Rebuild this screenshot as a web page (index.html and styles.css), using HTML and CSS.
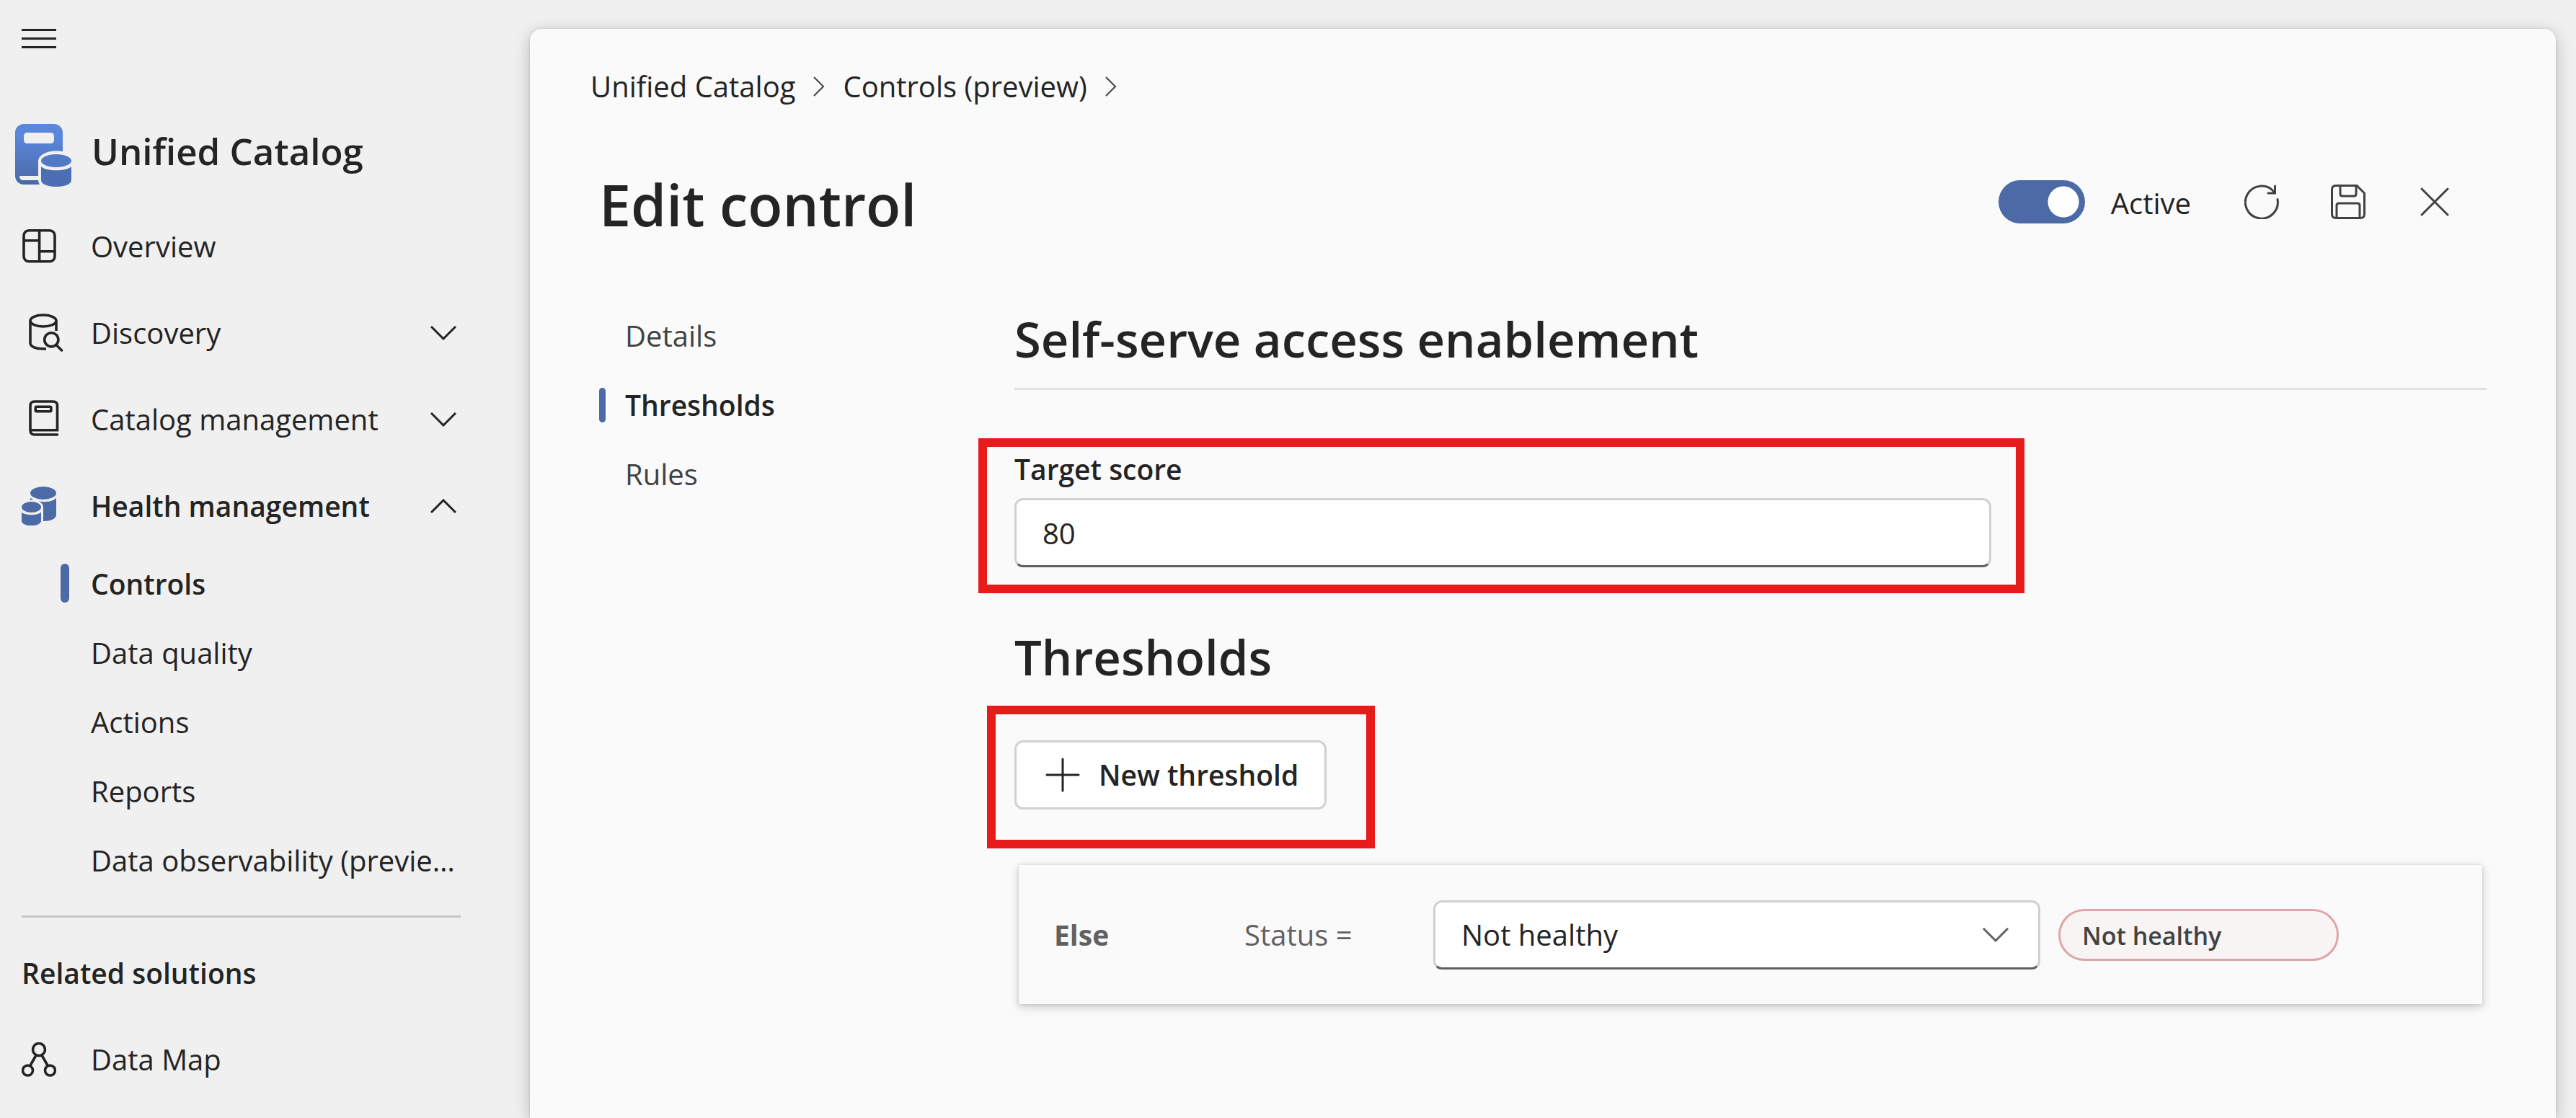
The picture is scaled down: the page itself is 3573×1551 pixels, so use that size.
FILE: index.html
```html
<!DOCTYPE html>
<html lang="en">
<head>
<meta charset="utf-8">
<meta name="viewport" content="width=device-width, initial-scale=1">
<title>Edit control - Unified Catalog</title>
<link rel="stylesheet" href="styles.css">
</head>
<body>
<div class="app">
  <aside class="sidebar">
    <button class="menu-button" type="button" aria-label="Toggle navigation">
      <svg class="icon" viewBox="0 0 48 48" fill="#242424"><path d="M0 10h48v3H0zM0 22h48v3H0zM0 34h48v3H0z"/></svg>
    </button>
    <div class="brand">
      <svg class="brand-logo" viewBox="0 0 78 88">
        <defs><linearGradient id="book" x1="0" y1="0" x2="0" y2="1"><stop offset="0.2" stop-color="#5a87dc"/><stop offset="1" stop-color="#4a68a4"/></linearGradient></defs>
        <path fill="url(#book)" fill-rule="evenodd" d="M12 0H54A12 12 0 0 1 66 12V38C48 35 32 42 32 52V72H6C6 76 8 78 12 78H32C32 80 33 82 34 84H12A12 12 0 0 1 0 72V12A12 12 0 0 1 12 0ZM17 12Q12 12 12 17V22Q12 27 17 27H49Q54 27 54 22V17Q54 12 49 12Z"/>
        <ellipse cx="57" cy="51" rx="21" ry="9" fill="#5179c6"/>
        <path fill="#4c6fb3" d="M36 59C42 66 72 66 78 59V78C78 90 36 90 36 78Z"/>
      </svg>
      <span class="brand-name">Unified Catalog</span>
    </div>
    <nav aria-label="Unified Catalog">
      <a class="nav-item" href="#">
        <svg class="icon" viewBox="0 0 48 48" fill="none" stroke="#242424" stroke-width="3.6"><rect x="3" y="1.8" width="43" height="43" rx="7"/><path d="M24.600 2v43M3 15.700h21.600M24.600 30.700h21"/></svg>
        <span class="nav-text">Overview</span>
      </a>
      <button class="nav-item" type="button">
        <svg class="icon icon-tall icon-inset" viewBox="0 0 48 54" fill="none" stroke="#242424" stroke-width="3.6" stroke-linecap="round"><ellipse cx="20" cy="10" rx="18" ry="8"/><path d="M2 10v31c0 5 8 8 18 8h4" stroke-linecap="butt"/><path d="M38 10v14" stroke-linecap="butt"/><circle cx="31.300" cy="36.300" r="9.600"/><path d="M38.500 44l7 7"/></svg>
        <span class="nav-text">Discovery</span>
        <svg class="chevron" viewBox="0 0 36 20" fill="none" stroke="#242424" stroke-width="3"><path d="M1 1l17 17L35 1"/></svg>
      </button>
      <button class="nav-item" type="button">
        <svg class="icon icon-tall icon-inset" viewBox="0 0 48 54" fill="none" stroke="#242424" stroke-width="3.6"><path stroke-linecap="round" d="M39.500 48H8q-6 0-6-6V8q0-6 6-6h25.500q6 0 6 6v33.700H2"/><rect x="9.300" y="9.300" width="21.500" height="6.500" rx="1.500"/></svg>
        <span class="nav-text">Catalog management</span>
        <svg class="chevron" viewBox="0 0 36 20" fill="none" stroke="#242424" stroke-width="3"><path d="M1 1l17 17L35 1"/></svg>
      </button>
      <button class="nav-item nav-strong" type="button" aria-expanded="true">
        <svg class="icon icon-tall" viewBox="0 0 48 54" fill="#4c6aa6"><ellipse cx="30" cy="9" rx="18" ry="9"/><path d="M48 15.500V39C48 45 40 48 30 48V28.500Q30 23.500 24 20.500C34 22 44 21 48 15.500ZM12 15.500L16 18.200L12 18.800Z"/><ellipse cx="13.500" cy="28.500" rx="13.500" ry="7.500"/><path d="M0 35.500c5 5 22 5 27 0v12c0 9-27 9-27 0z"/></svg>
        <span class="nav-text">Health management</span>
        <svg class="chevron" viewBox="0 0 36 20" fill="none" stroke="#242424" stroke-width="3"><path d="M1 19L18 2l17 17"/></svg>
      </button>
      <a class="sub-item sub-current" href="#" aria-current="page">Controls</a>
      <a class="sub-item" href="#">Data quality</a>
      <a class="sub-item" href="#">Actions</a>
      <a class="sub-item" href="#">Reports</a>
      <a class="sub-item" href="#">Data observability (preview)</a>
    </nav>
    <hr class="divider">
    <h2 class="related">Related solutions</h2>
    <a class="nav-item" href="#">
      <svg class="icon" viewBox="0 0 48 48" fill="none" stroke="#242424" stroke-width="3.6"><circle cx="24" cy="10" r="8.500"/><circle cx="8.500" cy="39" r="7"/><circle cx="39.500" cy="39" r="7"/><path d="M20 18l-8 14M28 18l8 14"/></svg>
      <span class="nav-text">Data Map</span>
    </a>
  </aside>

  <main class="panel">
    <nav class="breadcrumb" aria-label="Breadcrumb">
      <a href="#">Unified Catalog</a>
      <svg class="crumb-sep" viewBox="0 0 16 28" fill="none" stroke="#424242" stroke-width="2"><path d="M1 1l13 13L1 27"/></svg>
      <a href="#">Controls (preview)</a>
      <svg class="crumb-sep" viewBox="0 0 16 28" fill="none" stroke="#424242" stroke-width="2"><path d="M1 1l13 13L1 27"/></svg>
    </nav>

    <header class="page-head">
      <h1>Edit control</h1>
      <div class="actions">
        <label class="switch"><input type="checkbox" role="switch" checked><span class="switch-text">Active</span></label>
        <button class="tool" type="button" aria-label="Refresh"><svg class="icon" viewBox="0 0 48 48" fill="none" stroke="#424242" stroke-width="3" stroke-linecap="round"><path d="M46 20.500A22.500 22.500 0 1 1 41 10M42.500 2v10H33"/></svg></button>
        <button class="tool" type="button" aria-label="Save"><svg class="icon" viewBox="0 0 48 48" fill="none" stroke="#424242" stroke-width="3"><path d="M7 1.500h29l10.500 10.500v29q0 5.500-5.500 5.500H7q-5.500 0-5.500-5.500V7q0-5.500 5.500-5.500zM13 2v11q0 3 3 3h16q3 0 3-3V2M8 46V29q0-3 3-3h26q3 0 3 3v17"/></svg></button>
        <button class="tool" type="button" aria-label="Close"><svg class="icon" viewBox="0 0 48 48" fill="none" stroke="#424242" stroke-width="3" stroke-linecap="round"><path d="M6 6l36 36M42 6L6 42"/></svg></button>
      </div>
    </header>

    <div class="content">
      <nav class="tabs" aria-label="Control sections">
        <a class="tab" href="#">Details</a>
        <a class="tab tab-current" href="#" aria-current="true">Thresholds</a>
        <a class="tab" href="#">Rules</a>
      </nav>
      <section class="form">
        <h2 class="section-title ruled">Self-serve access enablement</h2>
        <div class="field highlight highlight-field">
          <label for="target">Target score</label>
          <input id="target" type="text" value="80">
        </div>
        <h2 class="section-title">Thresholds</h2>
        <div class="highlight highlight-button">
          <button class="new-threshold" type="button">
            <svg class="icon" viewBox="0 0 48 48" fill="none" stroke="#242424" stroke-width="3" stroke-linecap="round"><path d="M24 2v44M2 24h44"/></svg>
            New threshold
          </button>
        </div>
        <div class="rule-card">
          <strong>Else</strong>
          <label for="status">Status&nbsp;=</label>
          <div class="select-wrap">
            <select id="status"><option>Not healthy</option><option>Fair</option><option>Healthy</option></select>
            <svg class="chevron select-chevron" viewBox="0 0 36 20" fill="none" stroke="#616161" stroke-width="3"><path d="M1 1l17 17L35 1"/></svg>
          </div>
          <span class="badge">Not healthy</span>
        </div>
      </section>
    </div>
  </main>
</div>
</body>
</html>
```

FILE: styles.css
```css
* {
  box-sizing: border-box;
}

body {
  margin: 0;
  background: #f0f0f0;
  color: #242424;
  font: 400 40px/60px "Open Sans", "Noto Sans", sans-serif;
}

a {
  color: inherit;
  text-decoration: none;
}

button,
input,
select {
  margin: 0;
  font: inherit;
  color: inherit;
}

h1,
h2 {
  margin: 0;
  font-weight: 600;
}

.app {
  display: flex;
  min-height: 100vh;
}

.icon {
  flex: none;
  width: 48px;
  height: 48px;
}

.icon-tall {
  height: 54px;
}

.chevron {
  flex: none;
  width: 36px;
  height: 20px;
}

/* Sidebar */
.sidebar {
  flex: none;
  width: 735px;
  padding: 30px 96px 20px 30px;
}

.menu-button {
  display: flex;
  padding: 0;
  border: 0;
  background: none;
}

.brand {
  display: flex;
  align-items: center;
  gap: 28px;
  height: 120px;
  margin: 78px 0 6px -9px;
  font-size: 51px;
  font-weight: 600;
}

.brand-logo {
  width: 78px;
  height: 88px;
}

.brand-name {
  padding-bottom: 14px;
}

.nav-item {
  display: flex;
  align-items: center;
  width: 100%;
  height: 120px;
  padding: 0 6px 0 0;
  border: 0;
  background: none;
  text-align: left;
}

.icon-inset {
  margin: 0 -10px 0 10px;
}

.nav-text {
  flex: 1;
  padding-left: 48px;
}

.nav-strong,
.sub-current {
  font-size: 39px;
  font-weight: 600;
}

.sub-item {
  display: block;
  position: relative;
  height: 96px;
  padding-left: 96px;
  line-height: 96px;
  overflow: hidden;
  text-overflow: ellipsis;
  white-space: nowrap;
}

.sub-current::before {
  content: "";
  position: absolute;
  left: 54px;
  top: 20px;
  width: 12px;
  height: 54px;
  border-radius: 6px;
  background: #4c6aa6;
}

.divider {
  height: 3px;
  margin: 28px 0 17px;
  border: 0;
  background: #c7c7c7;
}

.related {
  font-size: 39px;
  line-height: 120px;
}

/* Main panel */
.panel {
  flex: 1;
  min-width: 0;
  margin: 40px 28px 0 0;
  padding: 48px 96px 0;
  border-radius: 16px 16px 0 0;
  background: #fafafa;
  box-shadow: 0 6px 24px rgba(0, 0, 0, 0.22), 0 0 4px rgba(0, 0, 0, 0.12);
}

.breadcrumb {
  display: flex;
  align-items: center;
  gap: 25px;
  margin-left: -12px;
  height: 64px;
}

.crumb-sep {
  width: 16px;
  height: 28px;
}

.page-head {
  display: flex;
  align-items: center;
  justify-content: space-between;
  height: 120px;
  margin-top: 68px;
}

h1 {
  padding-top: 8px;
  font-size: 79px;
  line-height: 112px;
}

.actions {
  display: flex;
  align-items: center;
  padding-right: 12px;
}

.switch {
  display: flex;
  align-items: center;
  gap: 36px;
  margin-right: 38px;
}

.switch input {
  appearance: none;
  width: 120px;
  height: 60px;
  border-radius: 30px;
  background: radial-gradient(circle at 90px 30px, #fff 21px, #4c6aa6 22px);
}

.switch-text {
  padding-top: 4px;
}

.tool {
  display: flex;
  padding: 36px;
  border: 0;
  background: none;
}

.content {
  display: flex;
  padding-top: 78px;
}

.tabs {
  flex: none;
  width: 576px;
}

.tab {
  display: block;
  position: relative;
  padding-left: 36px;
  line-height: 96px;
  color: #424242;
}

.tab-current {
  color: #242424;
  font-size: 39px;
  font-weight: 600;
}

.tab-current::before {
  content: "";
  position: absolute;
  left: 0;
  top: 24px;
  width: 9px;
  height: 48px;
  border-radius: 5px;
  background: #4c6aa6;
}

.form {
  flex: 1;
  min-width: 0;
  padding-top: 4px;
}

.section-title {
  font-size: 67px;
  line-height: 96px;
}

.ruled {
  height: 119px;
  border-bottom: 3px solid #e0e0e0;
}

.field {
  display: flex;
  flex-direction: column;
  width: 1355px;
  max-width: 100%;
  margin: 80px 0 76px;
}

.field label {
  height: 70px;
  font-size: 39px;
  font-weight: 600;
}

.field input,
.select-wrap select {
  appearance: none;
  width: 100%;
  height: 96px;
  padding: 0 36px;
  border: 3px solid #d1d1d1;
  border-bottom-color: #616161;
  border-radius: 12px;
  background: #fff;
}

/* Callout frames drawn round the highlighted controls */
.highlight {
  position: relative;
}

.highlight::after {
  content: "";
  position: absolute;
  border: 12px solid #e81b1b;
  pointer-events: none;
}

.highlight-field::after {
  inset: -13px -46px -36px -50px;
}

.highlight-button {
  width: fit-content;
  margin: 68px 0 77px;
}

.highlight-button::after {
  inset: -48px -67px -54px -38px;
}

.new-threshold {
  display: flex;
  align-items: center;
  gap: 26px;
  height: 96px;
  padding: 0 36px 0 40px;
  border: 3px solid #d1d1d1;
  border-radius: 12px;
  background: #fff;
  font-size: 39px;
  font-weight: 600;
}

.rule-card {
  display: grid;
  grid-template-columns: 264px 262px 842px 389px;
  align-items: center;
  margin: 0 6px;
  height: 193px;
  padding: 0 49px;
  color: #616161;
  box-shadow: 0 4px 12px rgba(0, 0, 0, 0.2), 0 0 4px rgba(0, 0, 0, 0.12);
}

.rule-card strong {
  font-size: 39px;
  font-weight: 700;
}

.select-wrap {
  position: relative;
  color: #242424;
}

.select-chevron {
  position: absolute;
  right: 44px;
  top: 38px;
  pointer-events: none;
}

.badge {
  height: 72px;
  margin-left: 25px;
  width: 389px;
  padding: 0 30px;
  border: 3px solid #dfa5a9;
  border-radius: 36px;
  background: #f8f4f4;
  color: #424242;
  font-size: 34px;
  font-weight: 600;
  line-height: 68px;
}
```
